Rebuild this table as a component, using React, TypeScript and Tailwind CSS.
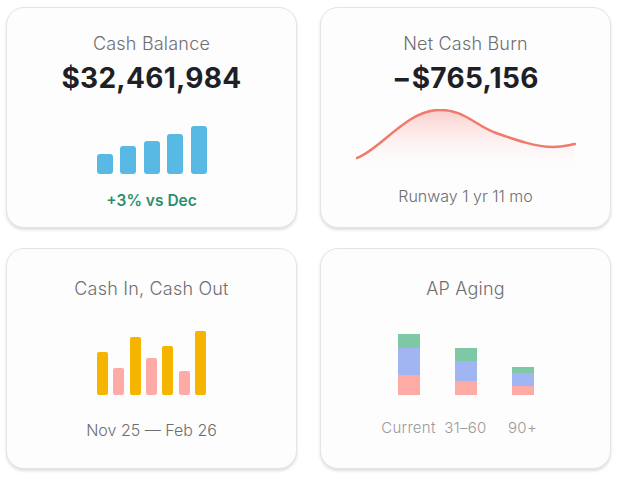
import React from "react";

const font = { fontFamily: "Inter, 'Noto Sans', sans-serif" };

function Card({ children, pt }: { children: React.ReactNode; pt: string }) {
  return (
    <div
      className={`w-[291px] h-[221px] rounded-[18px] bg-[#fdfdfe] border border-[#e4e4e6] shadow-[0_2px_3px_rgba(0,0,0,0.13)] flex flex-col items-center ${pt}`}
    >
      {children}
    </div>
  );
}

export default function App() {
  const blue = [20, 28, 33, 40, 48];
  const inout = [
    { h: 43, c: "bg-[#f5b400]" },
    { h: 27, c: "bg-[#ffaba5]" },
    { h: 58, c: "bg-[#f5b400]" },
    { h: 37, c: "bg-[#ffaba5]" },
    { h: 49, c: "bg-[#f5b400]" },
    { h: 24, c: "bg-[#ffaba5]" },
    { h: 64, c: "bg-[#f5b400]" },
  ];
  const aging = [
    { label: "Current", g: 14, b: 27, p: 20 },
    { label: "31–60", g: 13, b: 20, p: 14 },
    { label: "90+", g: 6, b: 13, p: 9 },
  ];
  return (
    <div className="w-[618px] h-[478px] bg-white pl-[6px] pt-[7px]" style={font}>
      <div className="grid grid-cols-[291px_291px] gap-x-[23px] gap-y-[20px]">
        <Card pt="pt-[24px]">
          <div className="text-[18px] leading-6 text-[#6e6e70] font-light tracking-[0.2px]">Cash Balance</div>
          <div className="mt-[4px] text-[28px] leading-9 font-bold text-[#1d2126] tracking-[0.3px]">$32,461,984</div>
          <div className="mt-[30px] h-[48px] flex items-end gap-[7.5px]">
            {blue.map((h, i) => (
              <div key={i} className="w-[16px] rounded-[3px] bg-[#59b9e5]" style={{ height: h }} />
            ))}
          </div>
          <div className="mt-[17px] text-[15.5px] leading-5 font-semibold text-[#2e8d6d]">+3% vs Dec</div>
        </Card>

        <Card pt="pt-[24px]">
          <div className="text-[18px] leading-6 text-[#6e6e70] font-light tracking-[0.2px]">Net Cash Burn</div>
          <div className="mt-[4px] text-[28px] leading-9 font-bold text-[#1d2126] tracking-[0.3px]">−$765,156</div>
          <svg className="mt-[13px]" width="220" height="65" viewBox="0 0 220 65">
            <defs>
              <linearGradient id="burnFill" x1="0" y1="0" x2="0" y2="1">
                <stop offset="0" stopColor="#f7a097" stopOpacity="0.5" />
                <stop offset="1" stopColor="#ffffff" stopOpacity="0" />
              </linearGradient>
            </defs>
            <path
              d="M1,49 C25,40 50,2 82,1 C108,0 118,16 140,24 C160,31 180,38 197,38 C207,38 213,36 219,35 L219,65 L1,65 Z"
              fill="url(#burnFill)"
            />
            <path
              d="M1,49 C25,40 50,2 82,1 C108,0 118,16 140,24 C160,31 180,38 197,38 C207,38 213,36 219,35"
              fill="none"
              stroke="#f07a6c"
              strokeWidth="2.5"
              strokeLinecap="round"
            />
          </svg>
          <div className="mt-[12px] text-[16px] leading-5 text-[#6e6e70] font-light">Runway 1 yr 11 mo</div>
        </Card>

        <Card pt="pt-[28px]">
          <div className="text-[18px] leading-6 text-[#6e6e70] font-light tracking-[0.2px]">Cash In, Cash Out</div>
          <div className="mt-[30px] h-[64px] flex items-end gap-[5.3px]">
            {inout.map((b, i) => (
              <div key={i} className={`w-[11px] rounded-[2px] ${b.c}`} style={{ height: b.h }} />
            ))}
          </div>
          <div className="mt-[25px] text-[16px] leading-5 text-[#6e6e70] font-light">Nov 25 — Feb 26</div>
        </Card>

        <Card pt="pt-[28px]">
          <div className="text-[18px] leading-6 text-[#6e6e70] font-light tracking-[0.2px]">AP Aging</div>
          <div className="mt-[33px] flex gap-[35px]">
            {aging.map((a) => (
              <div key={a.label} className="w-[22px] flex flex-col items-center">
                <div className="h-[61px] w-[22px] flex flex-col justify-end">
                  <div className="bg-[#7ec8a5]" style={{ height: a.g }} />
                  <div className="bg-[#a0b5f2]" style={{ height: a.b }} />
                  <div className="bg-[#ffaba5]" style={{ height: a.p }} />
                </div>
                <div className="mt-[23px] whitespace-nowrap text-[15px] leading-5 text-[#9a9a9c] font-light tracking-[0.3px]">{a.label}</div>
              </div>
            ))}
          </div>
        </Card>
      </div>
    </div>
  );
}
